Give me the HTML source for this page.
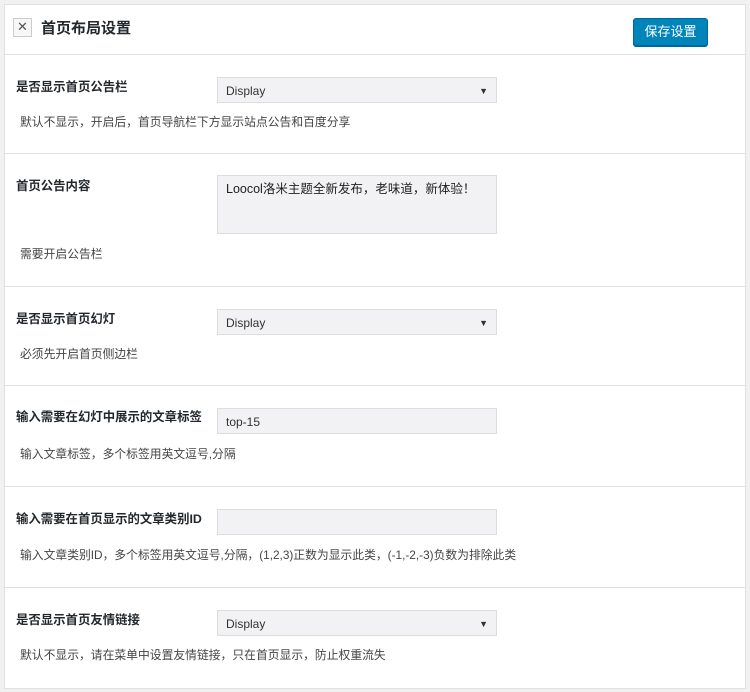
<!DOCTYPE html>
<html><head><meta charset="utf-8"><style>
body{margin:0;background:#f1f1f1;font-family:"Liberation Sans","Noto Sans CJK SC",sans-serif;color:#333;}
.p{position:absolute;left:4px;top:4px;width:740px;height:683px;background:#fff;border:1px solid #e1e1e1;}
.hd{position:absolute;left:0;top:0;width:740px;height:49px;border-bottom:1px solid #e1e1e1;}
.x{position:absolute;left:8px;top:13px;width:17px;height:17px;border:1px solid #ccc;background:#f7f7f7;font-size:13px;line-height:16px;text-align:center;color:#555;}
.t{position:absolute;left:36px;top:12px;font-size:15px;font-weight:bold;color:#23282d;}
.btn{position:absolute;left:628px;top:13px;width:73px;height:26px;background:#0085ba;border:1px solid #006799;border-radius:3px;color:#fff;font-size:13px;line-height:26px;text-align:center;box-shadow:0 1px 0 #006799;}
.sec{position:absolute;left:0;width:740px;border-bottom:1px solid #e1e1e1;}
.l{position:absolute;left:11px;font-size:12.4px;font-weight:bold;color:#23282d;}
.in{position:absolute;left:212px;height:26px;background:#f2f1f4;border:1px solid #ddd;font-size:12px;line-height:26px;padding-left:8px;box-sizing:border-box;width:280px;}
.ar{position:absolute;right:8px;top:0;font-size:9px;}
.d{position:absolute;left:15px;font-size:11.8px;color:#444;}
</style></head><body>
<div class="p">
<div class="hd"><div class="x">✕</div><div class="t">首页布局设置</div><div class="btn">保存设置</div></div>
<div class="sec" style="top:50px;height:98px"><div class="l" style="top:22px">是否显示首页公告栏</div><div class="in" style="top:22px">Display<span class="ar">▼</span></div><div class="d" style="top:58px">默认不显示，开启后，首页导航栏下方显示站点公告和百度分享</div></div>
<div class="sec" style="top:149px;height:132px"><div class="l" style="top:22px">首页公告内容</div><div class="in" style="top:21px;height:59px;line-height:18px;padding-top:4px;font-size:12.5px;color:#222">Loocol洛米主题全新发布，老味道，新体验！</div><div class="d" style="top:91px">需要开启公告栏</div></div>
<div class="sec" style="top:282px;height:98px"><div class="l" style="top:22px">是否显示首页幻灯</div><div class="in" style="top:22px">Display<span class="ar">▼</span></div><div class="d" style="top:58px">必须先开启首页侧边栏</div></div>
<div class="sec" style="top:381px;height:100px"><div class="l" style="top:21px">输入需要在幻灯中展示的文章标签</div><div class="in" style="top:22px">top-15</div><div class="d" style="top:59px">输入文章标签，多个标签用英文逗号,分隔</div></div>
<div class="sec" style="top:482px;height:100px"><div class="l" style="top:22px">输入需要在首页显示的文章类别ID</div><div class="in" style="top:22px"></div><div class="d" style="top:59px">输入文章类别ID，多个标签用英文逗号,分隔，(1,2,3)正数为显示此类，(-1,-2,-3)负数为排除此类</div></div>
<div class="sec" style="top:583px;height:99px;border:0"><div class="l" style="top:22px">是否显示首页友情链接</div><div class="in" style="top:22px">Display<span class="ar">▼</span></div><div class="d" style="top:58px">默认不显示，请在菜单中设置友情链接，只在首页显示，防止权重流失</div></div>
</div>
</body></html>
